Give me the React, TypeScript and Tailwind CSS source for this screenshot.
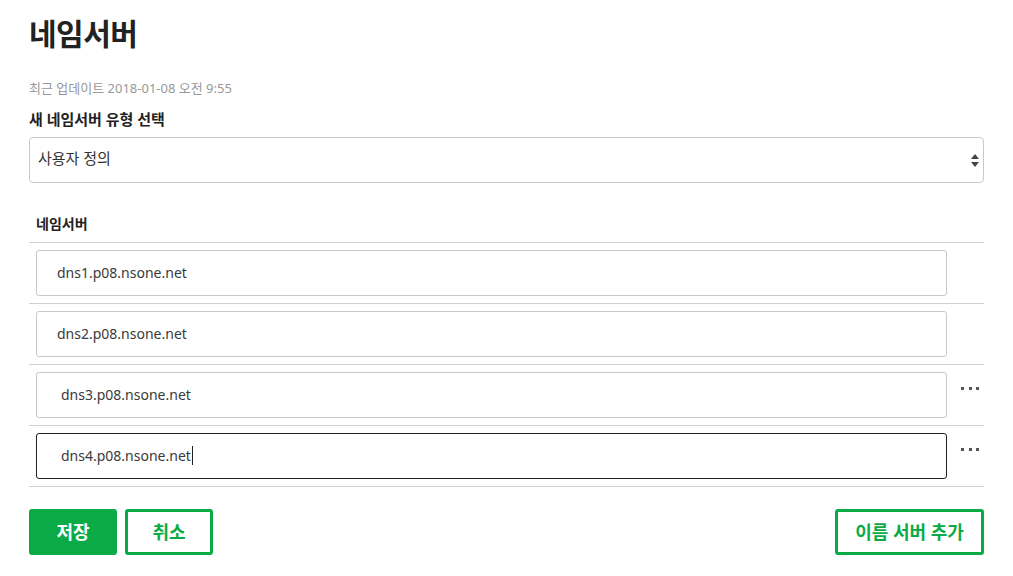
import { useState } from "react";

const font = { fontFamily: '"Noto Sans", "Noto Sans CJK KR", sans-serif' };

const servers = [
  { id: 1, value: "dns1.p08.nsone.net", pad: "pl-[20px]", menu: false },
  { id: 2, value: "dns2.p08.nsone.net", pad: "pl-[20px]", menu: false },
  { id: 3, value: "dns3.p08.nsone.net", pad: "pl-[24px]", menu: true },
  { id: 4, value: "dns4.p08.nsone.net", pad: "pl-[24px]", menu: true },
];

function Dots() {
  return (
    <button
      type="button"
      aria-label="더보기"
      className="flex h-[46px] w-[37px] items-start justify-end pt-[15px] pr-[5px]"
    >
      <span className="flex gap-[4.5px]">
        <span className="h-[3px] w-[3px] bg-[#555]" />
        <span className="h-[3px] w-[3px] bg-[#555]" />
        <span className="h-[3px] w-[3px] bg-[#555]" />
      </span>
    </button>
  );
}

function ServerRow({
  server,
  active,
}: {
  server: (typeof servers)[number];
  active: boolean;
}) {
  return (
    <div className="flex border-[#d0d0d0] border-b pt-[7px] pb-[7px] pl-[7px]">
      <div
        className={`relative flex h-[46px] w-[911px] items-center rounded-[3px] border pb-[2px] ${server.pad} ${
          active ? "border-[#222]" : "border-[#c8c8c8]"
        }`}
      >
        <span className="text-[#3a3a3a] text-[14px]">{server.value}</span>
        {active && <span className="ml-[1px] h-[19px] w-px bg-[#222]" />}
      </div>
      {server.menu && <Dots />}
    </div>
  );
}

export default function App() {
  const [type] = useState("사용자 정의");

  return (
    <div style={font} className="min-h-[576px] w-[1013px] bg-white text-[#222]">
      <div className="ml-[29px] w-[955px] pt-[14px]">
        <h1 className="font-bold text-[30px] leading-[40px] tracking-[-0.5px]">
          네임서버
        </h1>
        <p className="mt-[24px] text-[#999] text-[13px] leading-[20px]">
          최근 업데이트 2018-01-08 오전 9:55
        </p>
        <p className="mt-[10px] font-bold text-[15px] leading-[22px]">
          새 네임서버 유형 선택
        </p>
        <div className="mt-[7px] flex h-[46px] items-center justify-between rounded-[4px] border border-[#c8c8c8] pr-[4px] pb-[4px] pl-[8px]">
          <span className="text-[#333] text-[15px]">{type}</span>
          <svg width="8" height="13" viewBox="0 0 8 13" aria-hidden="true" className="mt-[4px]">
            <path d="M4 0 L8 5 L0 5 Z" fill="#444" />
            <path d="M0 8 L8 8 L4 13 Z" fill="#444" />
          </svg>
        </div>

        <div className="border-[#d0d0d0] border-b pt-[31px] pb-[8px] pl-[7px]">
          <p className="font-bold text-[14px] leading-[20px]">네임서버</p>
        </div>

        {servers.map((s) => (
          <ServerRow key={s.id} server={s} active={s.id === 4} />
        ))}

        <div className="mt-[22px] flex items-center justify-between">
          <div className="flex gap-[8px]">
            <button
              type="button"
              className="h-[46px] w-[88px] rounded-[3px] bg-[#0aab46] font-bold text-[18px] text-white"
            >
              저장
            </button>
            <button
              type="button"
              className="h-[46px] w-[88px] rounded-[3px] border-[#0aab46] border-[3px] font-bold text-[#0aab46] text-[18px]"
            >
              취소
            </button>
          </div>
          <button
            type="button"
            className="h-[46px] w-[149px] rounded-[3px] border-[#0aab46] border-[3px] font-bold text-[#0aab46] text-[18px]"
          >
            이름 서버 추가
          </button>
        </div>
      </div>
    </div>
  );
}
